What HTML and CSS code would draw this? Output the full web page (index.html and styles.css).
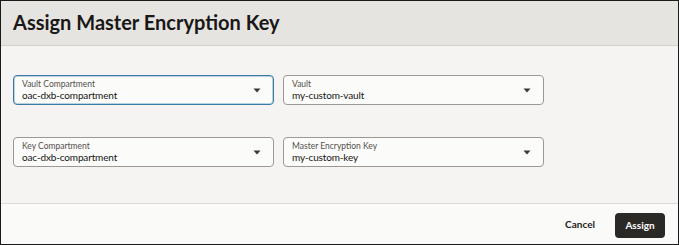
FILE: index.html
```html
<!DOCTYPE html>
<html>
<head>
<meta charset="utf-8">
<link rel="stylesheet" href="styles.css">
</head>
<body>
<div class="dialog">
  <div class="header"><h1 class="title">Assign Master Encryption Key</h1></div>
  <div class="body">
    <div class="grid">
      <div class="field focused">
        <div class="text"><span class="label">Vault Compartment</span><span class="value">oac-dxb-compartment</span></div>
        <svg class="arrow" width="8" height="5" viewBox="0 0 8 5"><path d="M0.5 0.5 L7.5 0.5 L4 4.5 Z" fill="#3a3835"/></svg>
      </div>
      <div class="field">
        <div class="text"><span class="label">Vault</span><span class="value">my-custom-vault</span></div>
        <svg class="arrow" width="8" height="5" viewBox="0 0 8 5"><path d="M0.5 0.5 L7.5 0.5 L4 4.5 Z" fill="#3a3835"/></svg>
      </div>
      <div class="field">
        <div class="text"><span class="label">Key Compartment</span><span class="value">oac-dxb-compartment</span></div>
        <svg class="arrow" width="8" height="5" viewBox="0 0 8 5"><path d="M0.5 0.5 L7.5 0.5 L4 4.5 Z" fill="#3a3835"/></svg>
      </div>
      <div class="field">
        <div class="text"><span class="label">Master Encryption Key</span><span class="value">my-custom-key</span></div>
        <svg class="arrow" width="8" height="5" viewBox="0 0 8 5"><path d="M0.5 0.5 L7.5 0.5 L4 4.5 Z" fill="#3a3835"/></svg>
      </div>
    </div>
  </div>
  <div class="footer">
    <button class="btn cancel">Cancel</button>
    <button class="btn primary">Assign</button>
  </div>
</div>
</body>
</html>
```
FILE: styles.css
```css
* { box-sizing: border-box; }
html, body { margin: 0; padding: 0; }
body { font-family: Lato, "Noto Sans", sans-serif; color: #161513; }
.dialog {
  width: 679px;
  height: 245px;
  border: 1px solid #1a1a1a;
  display: flex;
  flex-direction: column;
  background: #f5f4f2;
}
.header {
  height: 45px;
  background: #e6e4e1;
  border-bottom: 1px solid #d4d1cd;
  padding: 0 12px;
  display: flex;
  align-items: center;
}
.title {
  margin: 0;
  font-size: 20px;
  font-weight: 700;
  color: #1a1816;
  position: relative;
  top: -1px;
}
.body {
  flex: 1;
  padding: 29px 12px 0 12px;
}
.grid {
  display: grid;
  grid-template-columns: 261px 261px;
  column-gap: 9px;
  row-gap: 32px;
}
.field {
  height: 30px;
  background: #fbfbfa;
  border: 1px solid #9e9892;
  border-radius: 4px;
  display: flex;
  align-items: center;
  padding: 0 12px 0 8px;
}
.field.focused {
  border-color: #3b7aa3;
  box-shadow: inset 0 0 0 1px #b9d2e2;
}
.text {
  flex: 1;
  display: flex;
  flex-direction: column;
  line-height: 1;
}
.label {
  font-size: 8.5px;
  color: #55504b;
  margin-bottom: 2px;
}
.value {
  font-size: 10px;
  letter-spacing: -0.15px;
  color: #161513;
}
.arrow { display: block; margin-top: 1px; }
.footer {
  height: 41px;
  background: #fafaf9;
  border-top: 1px solid #dedbd7;
  display: flex;
  justify-content: flex-end;
  align-items: center;
  padding: 0 13px 0 0;
  gap: 20px;
}
.btn {
  font-family: Lato, "Noto Sans", sans-serif;
  font-size: 10px;
  font-weight: 700;
  border: none;
  border-radius: 4px;
  height: 25px;
  padding: 0 10px;
  cursor: pointer;
}
.cancel { background: transparent; color: #1f1d1b; padding: 0; }
.primary { background: #2b2926; color: #ffffff; width: 50px; padding: 0; margin-top: 2px; }
```
